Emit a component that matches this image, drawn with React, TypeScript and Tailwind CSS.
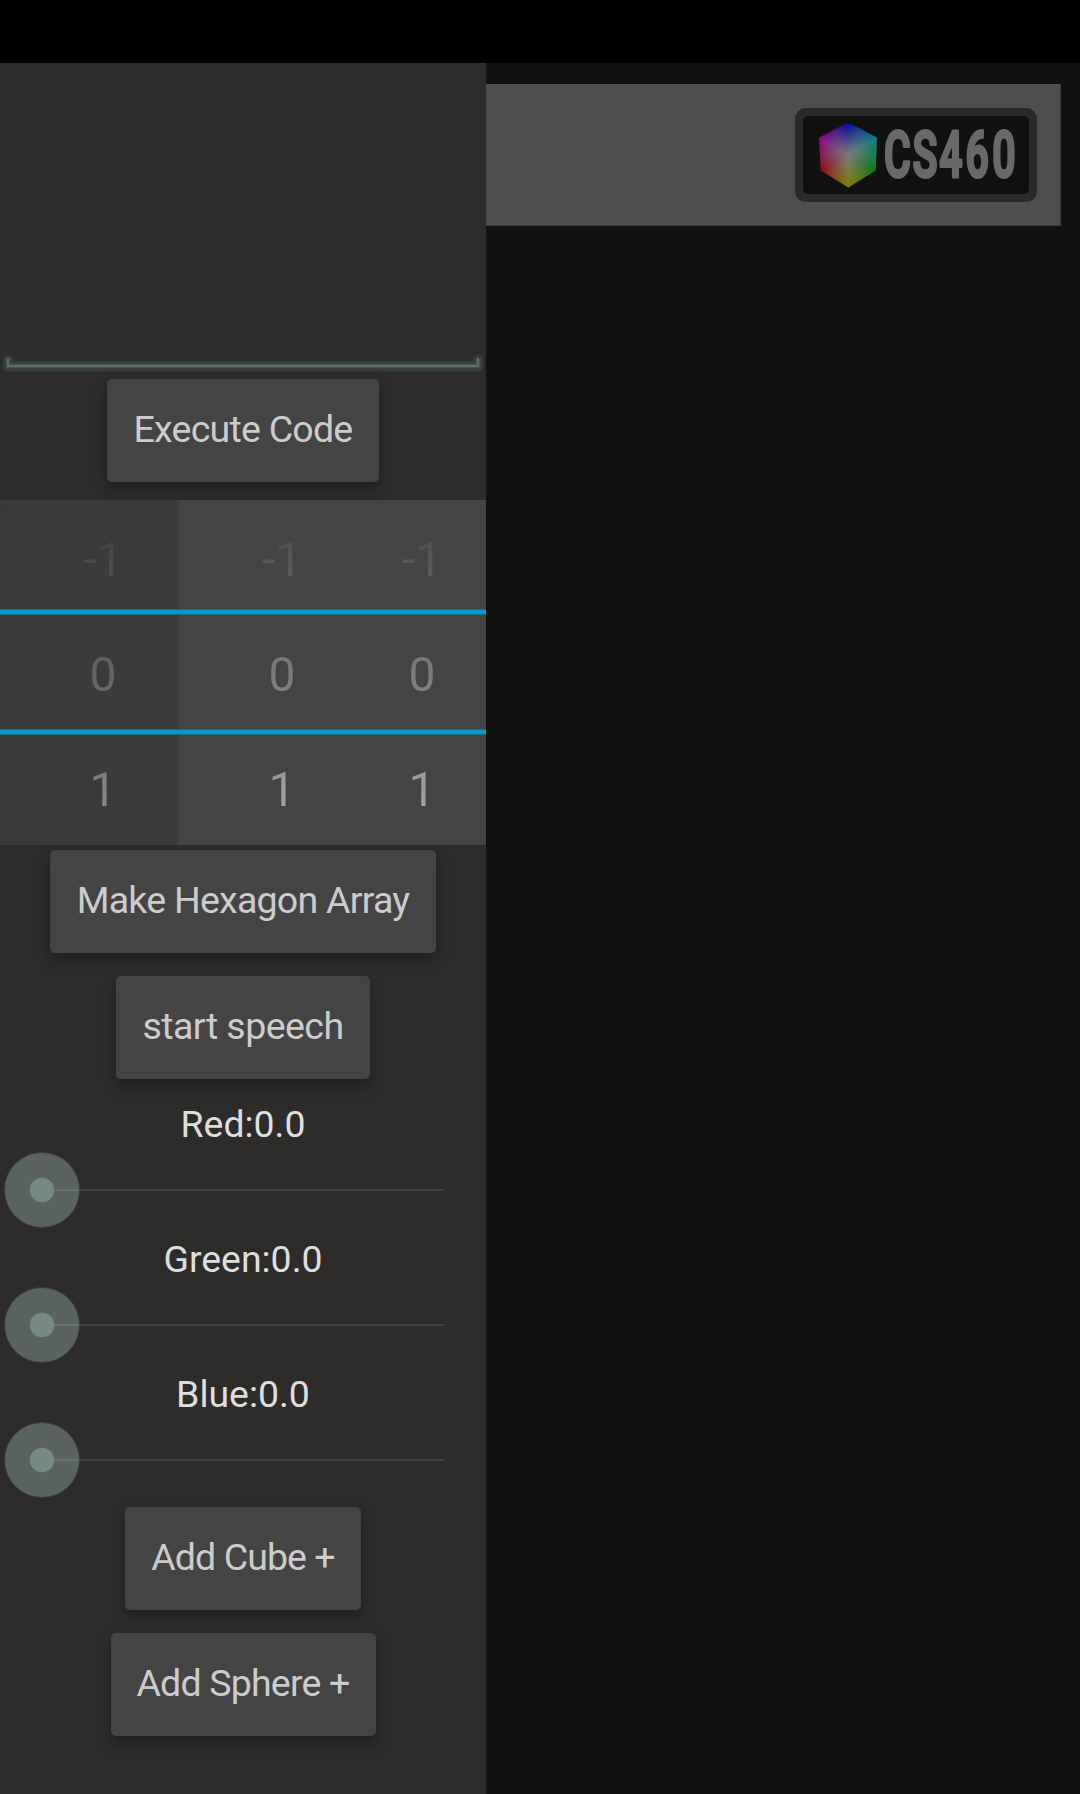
import React from "react";

function DrawerButton({ label, className }: { label: string; className: string }) {
  return (
    <button
      className={`h-[103px] shrink-0 whitespace-nowrap rounded-[5px] bg-[#444444] pb-[3px] text-[37.5px] text-[#cccccc] shadow-[0_7px_14px_rgba(0,0,0,0.3)] ${className}`}
    >
      {label}
    </button>
  );
}

function ColorSlider({ label }: { label: string }) {
  return (
    <div className="flex h-[135px] w-full flex-col items-center">
      <div className="h-[50px] text-[37.4px] leading-[50px] text-[#dedede]">{label}</div>
      <svg className="h-[85px] w-full" viewBox="0 0 486 85">
        <circle cx="42" cy="41" r="38" fill="#3b4241" />
        <circle cx="42" cy="41" r="37" fill="#5a6361" />
        <rect x="54" y="40" width="25" height="2" fill="#657371" />
        <rect x="79" y="40" width="365" height="2" fill="#424140" />
        <circle cx="42" cy="41" r="12.2" fill="#778984" />
      </svg>
    </div>
  );
}

function PickerColumn({ className, tones }: { className: string; tones: string[] }) {
  return (
    <div className={`flex flex-col text-center text-[48px] leading-[119px] ${className}`}>
      {["-1", "0", "1"].map((value, i) => (
        <div key={value} className="h-[115px]">
          <span className={`bg-gradient-to-b bg-clip-text text-transparent ${tones[i]}`}>{value}</span>
        </div>
      ))}
    </div>
  );
}

const dimTones = ["from-[#434343] to-[#4f4f4f]", "from-[#5d5d5d] to-[#6a6a6a]", "from-[#7b7b7b] to-[#888888]"];
const brightTones = ["from-[#4c4c4c] to-[#606060]", "from-[#737373] to-[#858585]", "from-[#959595] to-[#a4a4a4]"];

function NumberPicker() {
  return (
    <div className="relative mt-[18px] flex h-[345px] w-full shrink-0 bg-[linear-gradient(to_right,#3a3a3a_0,#3b3b3b_60px,#3b3b3b_179px,#444444_179px)]">
      <PickerColumn className="w-[206px]" tones={dimTones} />
      <PickerColumn className="w-[152px]" tones={brightTones} />
      <PickerColumn className="w-[128px]" tones={brightTones} />
      <div className="absolute inset-x-0 top-[109px] h-[6px] border-y border-[#226b86] bg-[#0799cb]" />
      <div className="absolute inset-x-0 top-[229px] h-[6px] border-y border-[#226b86] bg-[#0799cb]" />
    </div>
  );
}

function Logo() {
  return (
    <div className="flex h-[94px] w-[242px] items-center justify-center rounded-[11px] bg-[#2a2a2a]">
      <div className="flex h-[78px] w-[226px] items-center overflow-hidden rounded-[5px] bg-[#111111] pl-4">
        <div className="mt-px h-[65px] w-[58px] shrink-0 bg-[radial-gradient(circle_at_50%_49%,#7a7a7a_0,#7a7a7a00_32px),conic-gradient(from_0deg_at_50%_49%,#08089c,#088080_60deg,#047c0c_120deg,#807c00_180deg,#900814_240deg,#840c82_300deg,#08089c)] [clip-path:polygon(50%_0,100%_23%,98%_74%,50.5%_100%,3%_74%,0_23%)]" />
        <svg className="h-full w-[148px] shrink-0" viewBox="877 115.5 148 78">
          <text
            transform="translate(884 176.8) scale(0.63 1)"
            x="0 45.2 87.9 129.5 172"
            fill="#696969"
            stroke="#696969"
            strokeWidth="3"
            strokeLinejoin="round"
            fontFamily="Roboto, sans-serif"
            fontWeight="600"
            fontSize="65"
          >
            CS460
          </text>
        </svg>
      </div>
    </div>
  );
}

export default function App() {
  return (
    <div className="flex h-[1794px] w-[1080px] flex-col overflow-hidden bg-[#111111] font-['Roboto',sans-serif]">
      <div className="h-[63px] shrink-0 bg-black" />
      <div className="flex flex-1">
        <aside className="flex w-[486px] shrink-0 flex-col items-center bg-[#2d2c2a]">
          <div className="flex h-[316px] w-full shrink-0 items-end">
            <svg className="h-[26px] w-full" viewBox="0 353 486 26" fill="none">
              <path d="M8 359.5V366.5H478V359.5" stroke="#373c3a" strokeWidth="10.5" strokeLinejoin="round" strokeLinecap="round" />
              <path d="M8 359V366H478V359" stroke="#3c4846" strokeWidth="5" />
              <path d="M8 358V366H478V358" stroke="#5b6c69" strokeWidth="2.5" />
            </svg>
          </div>
          <DrawerButton label="Execute Code" className="w-[272px] tracking-[-0.75px]" />
          <NumberPicker />
          <DrawerButton label="Make Hexagon Array" className="mt-[5px] w-[386px] tracking-[-0.75px]" />
          <DrawerButton label="start speech" className="mt-[23px] w-[254px] tracking-[-0.55px]" />
          <div className="mt-5 flex w-full shrink-0 flex-col">
            <ColorSlider label="Red:0.0" />
            <ColorSlider label="Green:0.0" />
            <ColorSlider label="Blue:0.0" />
          </div>
          <DrawerButton label="Add Cube +" className="mt-[3px] w-[236px] tracking-[-0.92px]" />
          <DrawerButton label="Add Sphere +" className="mt-[23px] w-[265px] tracking-[-0.8px]" />
        </aside>
        <main className="flex-1 pr-[19px] pt-[21px]">
          <div className="flex h-[142px] items-center justify-end border-b border-r border-[#3c3c3c] bg-[#4e4e4e] pr-[23px]">
            <Logo />
          </div>
        </main>
      </div>
    </div>
  );
}
